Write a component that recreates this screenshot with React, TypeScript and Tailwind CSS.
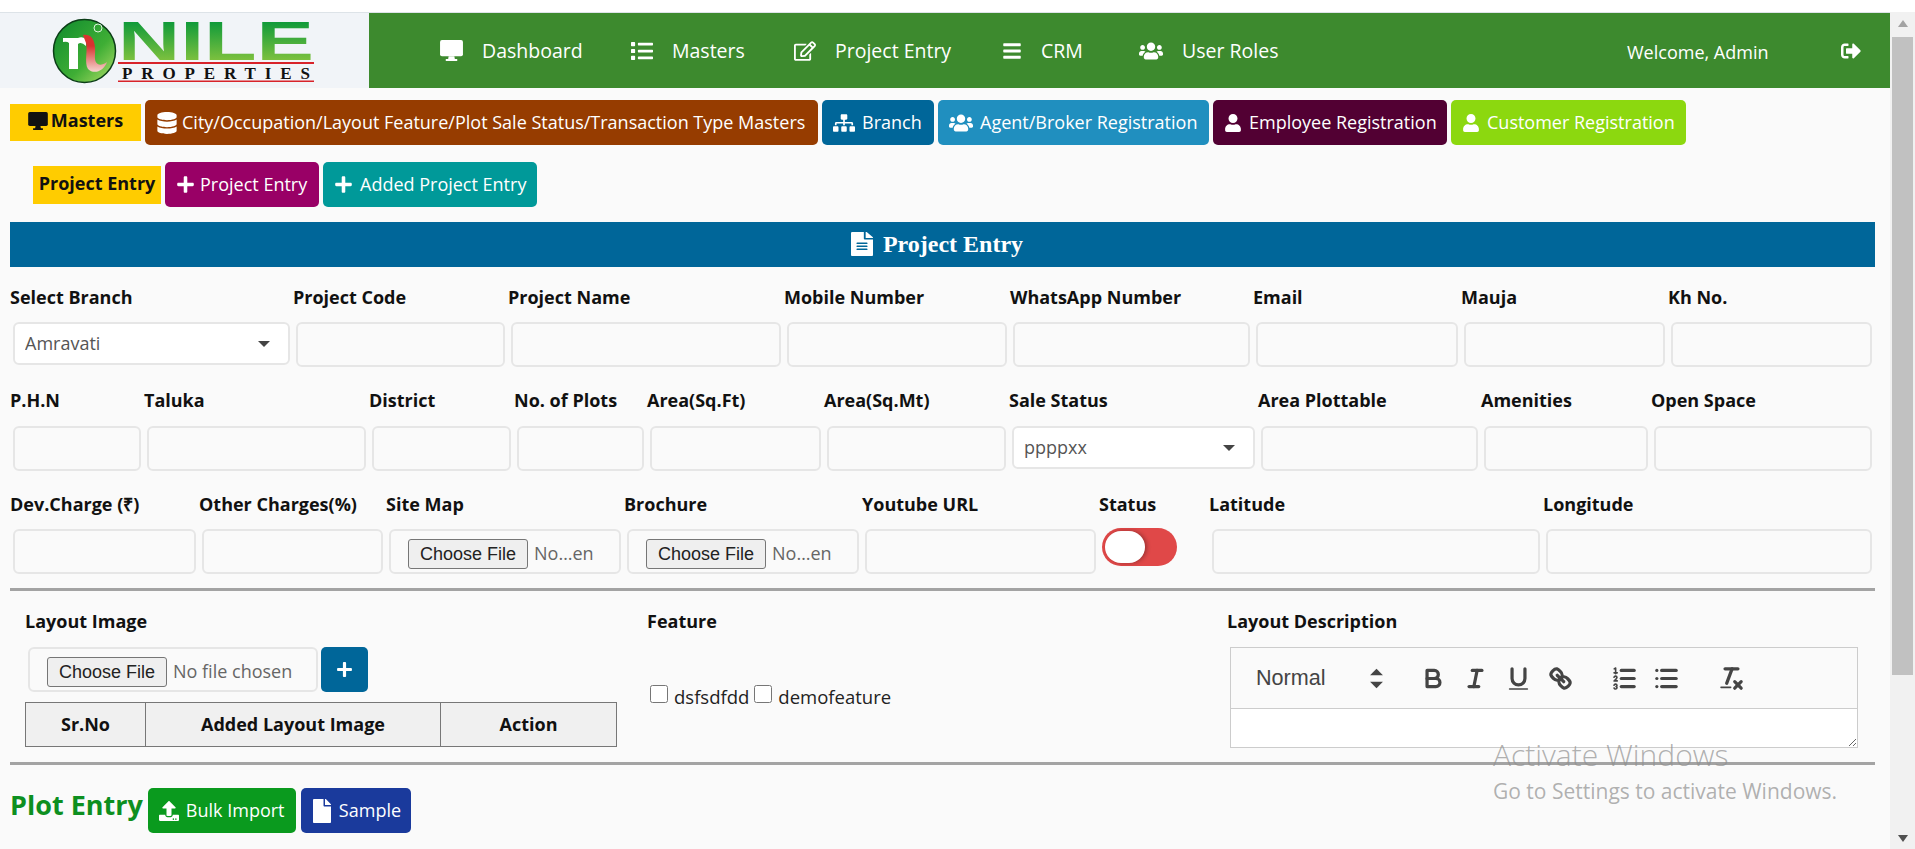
import type { ReactNode } from "react";
import {
  FaBars,
  FaDatabase,
  FaFile,
  FaList,
  FaPlus,
  FaRegEdit,
  FaSignOutAlt,
  FaSitemap,
  FaUpload,
  FaUser,
  FaUsers,
} from "react-icons/fa";

const DesktopIcon = ({ w, h }: { w: number; h: number }) => (
  <svg width={w} height={h} viewBox="0 0 24 22" fill="currentColor">
    <path d="M2 0h20a2 2 0 0 1 2 2v13a2 2 0 0 1-2 2H2a2 2 0 0 1-2-2V2a2 2 0 0 1 2-2Z" />
    <path d="M9 17h6l.5 3H18v2H6v-2h2.5Z" />
  </svg>
);

const Logo = () => (
  <svg width="370" height="75" viewBox="0 0 370 75" className="block overflow-visible">
    <defs>
      <linearGradient id="ball" x1="0" y1="0" x2="1" y2="1">
        <stop offset="0" stopColor="#0d8a2e" />
        <stop offset="0.6" stopColor="#3fae35" />
        <stop offset="1" stopColor="#b5e06a" />
      </linearGradient>
      <linearGradient id="word" x1="0" y1="0" x2="0" y2="1">
        <stop offset="0.2" stopColor="#0f9a3a" />
        <stop offset="0.9" stopColor="#8cc63f" />
      </linearGradient>
      <linearGradient id="tail" x1="0" y1="0" x2="0" y2="1">
        <stop offset="0.3" stopColor="#d9322f" />
        <stop offset="1" stopColor="#f6d5cf" />
      </linearGradient>
    </defs>
    <ellipse cx="84.5" cy="38" rx="31" ry="31.5" fill="url(#ball)" stroke="#0b3d17" strokeWidth="1.5" />
    <circle cx="98" cy="15" r="4" fill="none" stroke="#dff3df" strokeWidth="1" />
    <path d="M63 25H78Q82 23 86 26V33Q81 28 78 31V56H69V30Q67 28 63 29Z" fill="#fff" />
    <path d="M83 22C93 20 96 30 95 42C94 52 100 54 107 49C104 58 94 62 88 56C84 50 88 36 86 30Z" fill="url(#tail)" />
    <text x="118" y="47" fontFamily="'Liberation Sans', sans-serif" fontWeight="700" fontSize="56" fill="url(#word)" textLength="196" lengthAdjust="spacingAndGlyphs">
      NILE
    </text>
    <rect x="118" y="49" width="196" height="2" fill="#d8232a" />
    <text x="122" y="66" fontFamily="'Liberation Serif', serif" fontWeight="700" fontSize="17" fill="#111" textLength="188">
      PROPERTIES
    </text>
    <rect x="118" y="67.5" width="196" height="1.5" fill="#d8232a" />
  </svg>
);

const navItems = [
  { label: "Dashboard", icon: <DesktopIcon w={23} h={21} />, cls: "ml-[71px] w-[191px]" },
  { label: "Masters", icon: <FaList size={22} />, cls: "w-[163px]" },
  { label: "Project Entry", icon: <FaRegEdit size={22} />, cls: "w-[208px]" },
  { label: "CRM", icon: <FaBars size={20} />, cls: "w-[137px]" },
  { label: "User Roles", icon: <FaUsers size={24} />, cls: "w-[488px]" },
];

const Navbar = () => (
  <div className="flex h-[76px] border-t border-[#dde3e8]">
    <div className="w-[369px] bg-[#f1f4f8]">
      <Logo />
    </div>
    <div className="flex flex-1 items-center bg-[#3d8a2e] text-[19.5px] text-white">
      {navItems.map((n) => (
        <a key={n.label} href="#" className={`flex items-center gap-[19px] ${n.cls}`}>
          {n.icon}
          <span>{n.label}</span>
        </a>
      ))}
      <span className="w-[214px] pt-1 text-[18px]">Welcome, Admin</span>
      <FaSignOutAlt size={20} />
    </div>
  </div>
);

const TabBtn = ({ icon, label, cls }: { icon: ReactNode; label: string; cls: string }) => (
  <a href="#" className={`flex h-[45px] items-center gap-[7px] rounded-[5px] pl-[11px] text-[18px] whitespace-nowrap text-white ${cls}`}>
    {icon}
    {label}
  </a>
);

const Label = ({ children }: { children: ReactNode }) => (
  <label className="block text-[18px] leading-[24px] font-bold text-[#111]">{children}</label>
);

const inputCls = "block h-[45px] w-full rounded-[6px] border-2 border-[#e6e6e6] bg-[#fafafa]";
const fileCls =
  "h-[45px] w-full overflow-hidden rounded-[6px] border-2 border-[#e6e6e6] bg-[#fafafa] pt-[8px] pr-[22px] pl-[17px] text-[18px] text-[#666] file:mr-[6px] file:h-[30px] file:rounded-[3px] file:border file:border-[#767676] file:bg-[#efefef] file:px-[11px] file:font-['Liberation_Sans'] file:text-[18px] file:text-[#222]";

const Caret = () => (
  <span className="pointer-events-none absolute top-[19px] right-[20px] h-0 w-0 border-x-[6px] border-t-[6px] border-x-transparent border-t-[#444]" />
);

const Select = ({ value }: { value: string }) => (
  <div className="relative">
    <select className="block h-[43px] w-full appearance-none rounded-[6px] border-2 border-[#e6e6e6] bg-white pl-[10px] text-[18px] text-[#555]">
      <option>{value}</option>
    </select>
    <Caret />
  </div>
);

const Field = ({ label, children, tall }: { label: string; children?: ReactNode; tall?: boolean }) => (
  <div>
    <Label>{label}</Label>
    <div className={`mx-[3px] ${tall ? "mt-[14px]" : "mt-[13px]"}`}>{children ?? <input className={inputCls} />}</div>
  </div>
);

const Toggle = () => (
  <div className="-mt-px flex h-[38px] w-[75px] items-center rounded-full bg-[#e04848] pl-[3px]">
    <span className="h-[32px] w-[40px] rounded-full bg-white shadow-[2px_0_4px_rgba(0,0,0,0.3)]" />
  </div>
);

const QuillIcon = ({ children }: { children: ReactNode }) => (
  <span className="flex h-[29px] w-[42.5px] items-center justify-center">
    <svg viewBox="0 0 18 18" width="29" height="29" fill="none" stroke="#444" strokeWidth="2" strokeLinecap="round" strokeLinejoin="round">
      {children}
    </svg>
  </span>
);

const Editor = () => (
  <div className="mt-[14px] ml-[3px] w-[628px] border border-[#ccc]">
    <div className="flex h-[61px] items-center border-b border-[#ccc] pl-[25px] font-['Liberation_Sans'] text-[#444]">
      <span className="w-[106px] text-[21.6px]">Normal</span>
      <svg viewBox="0 0 18 18" width="29" height="29" fill="#444">
        <polygon points="5 11 9 15 13 11" />
        <polygon points="5 7 9 3 13 7" />
      </svg>
      <div className="ml-[21px] flex">
        <QuillIcon>
          <path d="M5,4H9.5A2.5,2.5,0,0,1,12,6.5v0A2.5,2.5,0,0,1,9.5,9H5V4Z" />
          <path d="M5,9h5.5A2.5,2.5,0,0,1,13,11.5v0A2.5,2.5,0,0,1,10.5,14H5V9Z" />
        </QuillIcon>
        <QuillIcon>
          <line x1="7" x2="13" y1="4" y2="4" />
          <line x1="5" x2="11" y1="14" y2="14" />
          <line x1="8" x2="10" y1="14" y2="4" />
        </QuillIcon>
        <QuillIcon>
          <path d="M5,3V9a4.012,4.012,0,0,0,4,4H9a4.012,4.012,0,0,0,4-4V3" />
          <rect height="1" rx=".5" ry=".5" width="12" x="3" y="15" fill="#444" stroke="none" />
        </QuillIcon>
        <QuillIcon>
          <line x1="7" x2="11" y1="7" y2="11" />
          <path d="M8.9,4.577a3.476,3.476,0,0,1,.36,4.679A3.476,3.476,0,0,1,4.577,8.9C3.185,7.5,2.035,6.4,4.217,4.217S7.5,3.185,8.9,4.577Z" />
          <path d="M13.423,9.1a3.476,3.476,0,0,0-4.679-.36,3.476,3.476,0,0,0,.36,4.679c1.392,1.392,2.5,2.542,4.679.36S14.815,10.5,13.423,9.1Z" />
        </QuillIcon>
      </div>
      <div className="ml-[21px] flex">
        <QuillIcon>
          <line x1="7" x2="15" y1="4" y2="4" />
          <line x1="7" x2="15" y1="9" y2="9" />
          <line x1="7" x2="15" y1="14" y2="14" />
          <line x1="2.5" x2="4.5" y1="5.5" y2="5.5" strokeWidth="1" />
          <path d="M3.5,6V2.5L2.6,3" strokeWidth="1" />
          <path d="M4.5,10.5h-2c0-.234,1.85-1.076,1.85-2.234A0.959,0.959,0,0,0,2.5,8.156" strokeWidth="1" />
          <path d="M2.5,14.846a0.959,0.959,0,0,0,1.85-.109A0.7,0.7,0,0,0,3.75,14a0.688,0.688,0,0,0,.6-0.736,0.959,0.959,0,0,0-1.85-.109" strokeWidth="1" />
        </QuillIcon>
        <QuillIcon>
          <line x1="6" x2="15" y1="4" y2="4" />
          <line x1="6" x2="15" y1="9" y2="9" />
          <line x1="6" x2="15" y1="14" y2="14" />
          <line x1="3" x2="3" y1="4" y2="4" />
          <line x1="3" x2="3" y1="9" y2="9" />
          <line x1="3" x2="3" y1="14" y2="14" />
        </QuillIcon>
      </div>
      <div className="ml-[22px] flex">
        <QuillIcon>
          <line x1="5" x2="13" y1="3" y2="3" />
          <line x1="6" x2="9.35" y1="12" y2="3" />
          <line x1="11" x2="15" y1="11" y2="15" />
          <line x1="15" x2="11" y1="11" y2="15" />
          <rect height="1" rx=".5" ry=".5" width="7" x="2" y="14" fill="#444" stroke="none" />
        </QuillIcon>
      </div>
    </div>
    <textarea className="block h-[38px] w-full resize-y bg-white" />
  </div>
);

const Scrollbar = () => (
  <div className="flex w-[25px] flex-col items-center bg-[#f1f1f1] pt-[8px]">
    <span className="h-0 w-0 border-x-[5px] border-b-[7px] border-x-transparent border-b-[#a3a3a3]" />
    <div className="mt-[10px] h-[638px] w-[21px] bg-[#c1c1c1]" />
    <div className="flex-1" />
    <span className="mb-[7px] h-0 w-0 border-x-[5px] border-t-[7px] border-x-transparent border-t-[#505050]" />
  </div>
);

export default function App() {
  return (
    <div className="relative h-[849px] overflow-hidden bg-white pt-[12px] font-['Open_Sans',sans-serif]">
      <div className="flex h-[837px]">
        <div className="min-w-0 flex-1 overflow-hidden bg-[#fafafa]">
          <Navbar />

          <div className="flex items-center gap-[4px] pt-[12px] pl-[10px]">
            <span className="flex h-[37px] w-[131px] items-center justify-center gap-[3px] bg-[#ffcc00] pb-[4px] text-[18px] font-bold text-[#111]">
              <DesktopIcon w={20} h={18} /> Masters
            </span>
            <TabBtn icon={<FaDatabase size={22} className="-mr-[3px]" />} label="City/Occupation/Layout Feature/Plot Sale Status/Transaction Type Masters" cls="w-[673px] bg-[#963c00]" />
            <TabBtn icon={<FaSitemap size={22} />} label="Branch" cls="w-[112px] bg-[#006699]" />
            <TabBtn icon={<FaUsers size={24} />} label="Agent/Broker Registration" cls="w-[271px] bg-[#208fbf]" />
            <TabBtn icon={<FaUser size={18} />} label="Employee Registration" cls="w-[234px] bg-[#520033]" />
            <TabBtn icon={<FaUser size={18} />} label="Customer Registration" cls="w-[235px] bg-[#8cd80f]" />
          </div>

          <div className="flex items-center gap-[4px] pt-[17px] pl-[33px]">
            <span className="flex h-[38px] w-[128px] items-center justify-center bg-[#ffcc00] pb-[2px] text-[18px] font-bold text-[#111]">
              Project Entry
            </span>
            <TabBtn icon={<FaPlus size={19} className="-mr-[2px]" />} label="Project Entry" cls="w-[154px] bg-[#990066]" />
            <TabBtn icon={<FaPlus size={19} />} label="Added Project Entry" cls="w-[214px] bg-[#009999]" />
          </div>

          <div className="mt-[15px] ml-[10px] flex h-[45px] w-[1865px] items-center justify-center gap-[10px] bg-[#006699] pr-[11px] pb-[2px] font-['Liberation_Serif',serif] text-[24px] font-bold text-white">
            <svg width="22" height="24" viewBox="0 0 384 512" preserveAspectRatio="none" fill="currentColor">
              <path d="M224 136V0H24C10.7 0 0 10.7 0 24v464c0 13.300 10.700 24 24 24h336c13.300 0 24-10.700 24-24V160H248c-13.200 0-24-10.800-24-24zm64 236c0 6.600-5.400 12-12 12H108c-6.600 0-12-5.400-12-12v-8c0-6.600 5.400-12 12-12h168c6.600 0 12 5.400 12 12v8zm0-64c0 6.600-5.400 12-12 12H108c-6.600 0-12-5.400-12-12v-8c0-6.600 5.400-12 12-12h168c6.600 0 12 5.400 12 12v8zm0-72v8c0 6.600-5.400 12-12 12H108c-6.600 0-12-5.400-12-12v-8c0-6.600 5.400-12 12-12h168c6.600 0 12 5.400 12 12zm96-114.100v6.100H256V0h6.100c6.400 0 12.500 2.500 17 7l97.900 98c4.500 4.500 7 10.600 7 16.900z" />
            </svg>
            Project Entry
          </div>

          <div className="ml-[10px] w-[1865px]">
            <div className="mt-[18px] grid grid-cols-[283px_215px_276px_226px_243px_208px_207px_207px]">
              <Field label="Select Branch"><Select value="Amravati" /></Field>
              <Field label="Project Code" />
              <Field label="Project Name" />
              <Field label="Mobile Number" />
              <Field label="WhatsApp Number" />
              <Field label="Email" />
              <Field label="Mauja" />
              <Field label="Kh No." />
            </div>

            <div className="mt-[21px] grid grid-cols-[134px_225px_145px_133px_177px_185px_249px_223px_170px_224px]">
              <Field tall label="P.H.N" />
              <Field tall label="Taluka" />
              <Field tall label="District" />
              <Field tall label="No. of Plots" />
              <Field tall label="Area(Sq.Ft)" />
              <Field tall label="Area(Sq.Mt)" />
              <Field tall label="Sale Status"><Select value="ppppxx" /></Field>
              <Field tall label="Area Plottable" />
              <Field tall label="Amenities" />
              <Field tall label="Open Space" />
            </div>

            <div className="mt-[21px] grid grid-cols-[189px_187px_238px_238px_237px_110px_334px_332px]">
              <Field label="Dev.Charge (₹)" />
              <Field label="Other Charges(%)" />
              <Field label="Site Map"><input type="file" className={fileCls} /></Field>
              <Field label="Brochure"><input type="file" className={fileCls} /></Field>
              <Field label="Youtube URL" />
              <Field label="Status"><Toggle /></Field>
              <Field label="Latitude" />
              <Field label="Longitude" />
            </div>

            <hr className="mt-[14px] border-t-[3px] border-[#a3a3a3]" />

            <div className="grid grid-cols-[637px_580px_1fr] pt-[18px] pb-[14px]">
              <div className="pl-[15px]">
                <Label>Layout Image</Label>
                <div className="mt-[14px] ml-[3px] flex items-stretch gap-[3px]">
                  <input type="file" className={`${fileCls} !w-[290px]`} />
                  <button className="flex h-[45px] w-[47px] items-center justify-center rounded-[5px] bg-[#006699] text-white">
                    <FaPlus size={17} />
                  </button>
                </div>
                <div className="mt-[10px] grid h-[45px] w-[592px] grid-cols-[120px_295px_1fr] border border-[#777] bg-[#f0f0f0] text-[18px] font-bold text-[#111]">
                  <div className="flex items-center justify-center border-r border-[#777]">Sr.No</div>
                  <div className="flex items-center justify-center border-r border-[#777]">Added Layout Image</div>
                  <div className="flex items-center justify-center">Action</div>
                </div>
              </div>
              <div>
                <Label>Feature</Label>
                <div className="mt-[50px] ml-[3px] flex items-center text-[18.5px] text-[#222]">
                  <input type="checkbox" className="mr-[6px] mb-[6px] h-[18px] w-[18px] rounded-[3px]" />
                  <span className="mr-[5px]">dsfsdfdd</span>
                  <input type="checkbox" className="mr-[6px] mb-[6px] h-[18px] w-[18px] rounded-[3px]" />
                  <span>demofeature</span>
                </div>
              </div>
              <div>
                <Label>Layout Description</Label>
                <Editor />
              </div>
            </div>

            <hr className="border-t-[3px] border-[#a3a3a3]" />

            <div className="mt-[20px] flex items-center gap-[5px]">
              <h2 className="pb-[11px] text-[27px] font-bold text-[#0d8f20]">Plot Entry</h2>
              <TabBtn icon={<FaUpload size={20} />} label="Bulk Import" cls="w-[148px] bg-[#0a9a1e]" />
              <TabBtn icon={<FaFile size={24} className="-mx-[2px]" />} label="Sample" cls="w-[110px] bg-[#1a3a9c]" />
            </div>
          </div>
        </div>
        <Scrollbar />
      </div>

      <div className="pointer-events-none absolute top-[737px] left-[1493px] text-[#8f8f8f]/70">
        <div className="text-[30px] leading-[36px] font-light">Activate Windows</div>
        <div className="mt-[6px] text-[21px] leading-[24px]">Go to Settings to activate Windows.</div>
      </div>
    </div>
  );
}
